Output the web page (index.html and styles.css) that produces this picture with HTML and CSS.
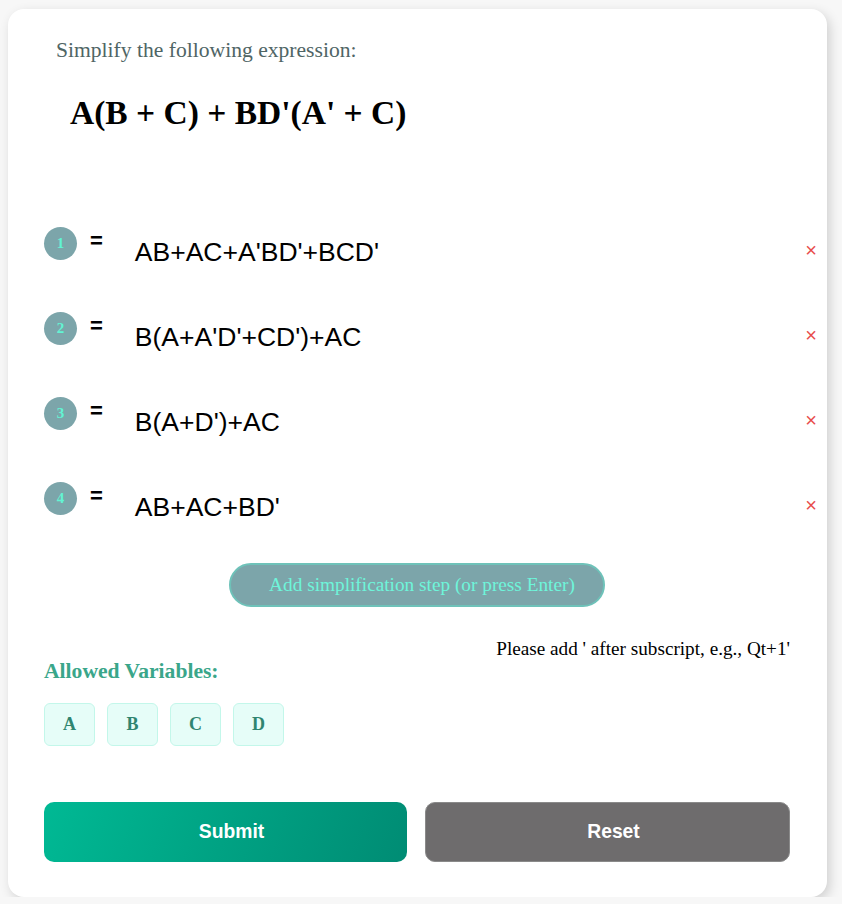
FILE: index.html
```html
<!DOCTYPE html>
<html lang="en">
<head>
<meta charset="utf-8">
<title>Simplify</title>
<link rel="stylesheet" href="styles.css">
</head>
<body>
<div class="card">
  <div class="prompt">Simplify the following expression:</div>
  <div class="problem">A(B + C) + BD'(A' + C)</div>

  <div class="steps">
    <div class="step">
      <span class="num">1</span><span class="eq">=</span><span class="expr">AB+AC+A'BD'+BCD'</span><span class="del">×</span>
    </div>
    <div class="step">
      <span class="num">2</span><span class="eq">=</span><span class="expr">B(A+A'D'+CD')+AC</span><span class="del">×</span>
    </div>
    <div class="step">
      <span class="num">3</span><span class="eq">=</span><span class="expr">B(A+D')+AC</span><span class="del">×</span>
    </div>
    <div class="step">
      <span class="num">4</span><span class="eq">=</span><span class="expr">AB+AC+BD'</span><span class="del">×</span>
    </div>
  </div>

  <div class="add-wrap"><button class="add">Add simplification step (or press Enter)</button></div>

  <div class="hint">Please add ' after subscript, e.g., Qt+1'</div>
  <div class="vars-title">Allowed Variables:</div>
  <div class="vars">
    <span class="var">A</span><span class="var">B</span><span class="var">C</span><span class="var">D</span>
  </div>

  <div class="actions">
    <button class="btn submit">Submit</button>
    <button class="btn reset">Reset</button>
  </div>
</div>
</body>
</html>
```
FILE: styles.css
```css
html, body {
  margin: 0;
  padding: 0;
  background: #f7f7f7;
}
body {
  font-family: "Liberation Serif", "Times New Roman", serif;
  overflow: hidden;
}
.card {
  box-sizing: border-box;
  width: 819px;
  height: 888px;
  margin: 9px 0 0 8px;
  padding: 29px 37px 36px 36px;
  background: #fff;
  border-radius: 16px;
  box-shadow: 3px 4px 12px rgba(0, 0, 0, 0.16);
}
.prompt {
  margin-left: 12px;
  font-size: 21.6px;
  line-height: 24px;
  color: #4f6565;
}
.problem {
  margin: 31px 0 0 26px;
  font-size: 33.5px;
  line-height: 40px;
  font-weight: bold;
  color: #000;
}
.steps {
  margin-top: 94px;
  display: flex;
  flex-direction: column;
  gap: 47px;
  margin-right: -27px;
}
.step {
  display: flex;
  align-items: flex-start;
  height: 38px;
}
.num {
  width: 33px;
  height: 33px;
  border-radius: 50%;
  background: #7ca5aa;
  color: #62f4d3;
  font-weight: bold;
  font-size: 15px;
  display: flex;
  align-items: center;
  justify-content: center;
}
.eq {
  margin: 2px 0 0 13px;
  font-family: "Liberation Sans", Arial, sans-serif;
  font-weight: bold;
  font-size: 22px;
  line-height: 24px;
}
.expr {
  margin: 10px 0 0 32px;
  font-family: "Liberation Sans", Arial, sans-serif;
  font-size: 26.5px;
  line-height: 30px;
  color: #000;
}
.del {
  margin: 13px 0 0 auto;
  font-family: "Liberation Sans", Arial, sans-serif;
  font-size: 20px;
  line-height: 20px;
  color: #e84c4c;
}
.add-wrap {
  margin-top: 43px;
  display: flex;
  justify-content: center;
}
.add {
  width: 376px;
  height: 44px;
  border-radius: 22px;
  border: 2px solid #6ec2b9;
  background: #7ca5aa;
  color: #6ef5da;
  font-family: "Liberation Serif", "Times New Roman", serif;
  font-size: 19.3px;
  padding: 0 0 0 10px;
}
.hint {
  margin-top: 31px;
  text-align: right;
  font-size: 19.2px;
  line-height: 21px;
  color: #000;
}
.vars-title {
  margin-top: 0;
  font-size: 21.6px;
  line-height: 24px;
  font-weight: bold;
  color: #3aa68a;
}
.vars {
  margin-top: 20px;
  display: flex;
  gap: 12px;
}
.var {
  box-sizing: border-box;
  width: 51px;
  height: 43px;
  border: 1px solid #c3f7ea;
  border-radius: 6px;
  background: #e6fdf8;
  color: #2f8570;
  font-weight: bold;
  font-size: 18px;
  display: flex;
  align-items: center;
  justify-content: center;
}
.actions {
  margin-top: 56px;
  display: flex;
  gap: 18px;
}
.btn {
  flex: 1;
  height: 60px;
  border-radius: 10px;
  color: #fff;
  font-family: "Liberation Sans", Arial, sans-serif;
  font-weight: bold;
  font-size: 19.3px;
  padding: 0 0 0 12px;
}
.submit {
  border: none;
  background: linear-gradient(110deg, #00b994 0%, #00a283 50%, #008c74 100%);
}
.reset {
  border: 1px solid #8a8a8a;
  background: #6e6c6d;
}
```
